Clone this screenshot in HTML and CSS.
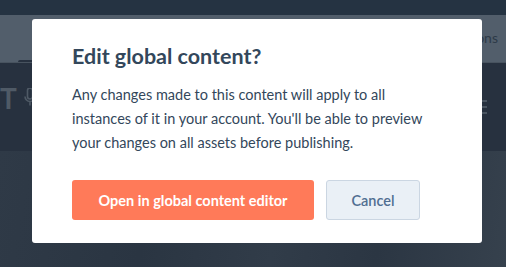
FILE: index.html
```html
<!DOCTYPE html>
<html lang="en">
<head>
    <meta charset="UTF-8">
    <meta name="viewport" content="width=device-width, initial-scale=1.0">
    <title>Edit global content?</title>
    <link rel="stylesheet" href="styles.css">
</head>
<body>
    <div class="page">
        <div class="topbar"></div>
        <div class="subnav">
            <span class="subnav-tab"></span>
            <span class="subnav-link">Options</span>
        </div>
        <div class="hero">
            <span class="hero-logo">T<svg class="mic" viewBox="0 0 12 20" width="12" height="20"><path d="M3.5 2.5a2.5 2.5 0 0 1 5 0v6a2.5 2.5 0 0 1-5 0z M1 8.5a5 5 0 0 0 10 0 M6 13.5v4" fill="none" stroke="#4f5a66" stroke-width="1.6"/></svg></span>
            <span class="hero-menu">
                <i></i><i></i><i></i>
            </span>
        </div>
        <div class="photo"></div>
    </div>

    <div class="overlay">
        <div class="modal">
            <h1 class="modal-title">Edit global content?</h1>
            <p class="modal-text">Any changes made to this content will apply to all instances of it in your account. You'll be able to preview your changes on all assets before publishing.</p>
            <div class="modal-actions">
                <button class="button primary">Open in global content editor</button>
                <button class="button secondary">Cancel</button>
            </div>
        </div>
    </div>
</body>
</html>
```

FILE: styles.css
```css
html, body {
    margin: 0;
    height: 100%;
    overflow: hidden;
}
body {
    font-family: Lato, "Open Sans", sans-serif;
    background: #2c3744;
}
.page {
    display: flex;
    flex-direction: column;
    height: 100%;
}
.topbar {
    height: 15px;
    background: #253342;
}
.subnav {
    height: 47px;
    background: #525e6b;
    display: flex;
    align-items: flex-end;
    justify-content: space-between;
    border-bottom: 1px solid #48535f;
}
.subnav-tab {
    width: 60px;
    height: 2px;
    margin-left: 18px;
    background: #27313f;
    border-radius: 3px 3px 0 0;
}
.subnav-link {
    align-self: flex-start;
    margin-top: 14px;
    margin-right: 8px;
    font-size: 14px;
    color: #2d3a48;
}
.hero {
    height: 88px;
    background: #27313f;
    display: flex;
    align-items: center;
    justify-content: space-between;
}
.hero-logo {
    display: flex;
    align-items: center;
    gap: 7px;
    margin-bottom: 18px;
    font-size: 28px;
    font-weight: 700;
    color: #4f5a66;
}
.hero-menu {
    display: flex;
    flex-direction: column;
    gap: 4px;
    width: 5px;
    margin-right: 19px;
}
.hero-menu i {
    height: 2px;
    background: #4a5561;
}
.photo {
    flex: 1;
    background: linear-gradient(100deg, #2f3a47 0%, #2a3542 30%, #313c49 55%, #2b3643 75%, #36414d 100%);
}
.overlay {
    position: absolute;
    top: 19px;
    left: 32px;
}
.modal {
    width: 450px;
    height: 224px;
    box-sizing: border-box;
    padding: 22px 40px 0;
    background: #fff;
    border-radius: 3px;
}
.modal-title {
    margin: 0;
    font-size: 21.5px;
    line-height: 30px;
    font-weight: 700;
    color: #33475b;
}
.modal-text {
    margin: 12px 0 0;
    font-size: 14.5px;
    line-height: 24px;
    color: #33475b;
}
.modal-actions {
    display: flex;
    gap: 12px;
    margin-top: 25px;
}
.button {
    height: 40px;
    box-sizing: border-box;
    border-radius: 3px;
    font-family: inherit;
    font-size: 14.5px;
    font-weight: 700;
    cursor: pointer;
}
.primary {
    width: 242px;
    border: none;
    background: #ff7a59;
    color: #fff;
}
.secondary {
    width: 94px;
    border: 1px solid #cbd6e2;
    background: #eaf0f6;
    color: #506e91;
    font-weight: 600;
}
```
